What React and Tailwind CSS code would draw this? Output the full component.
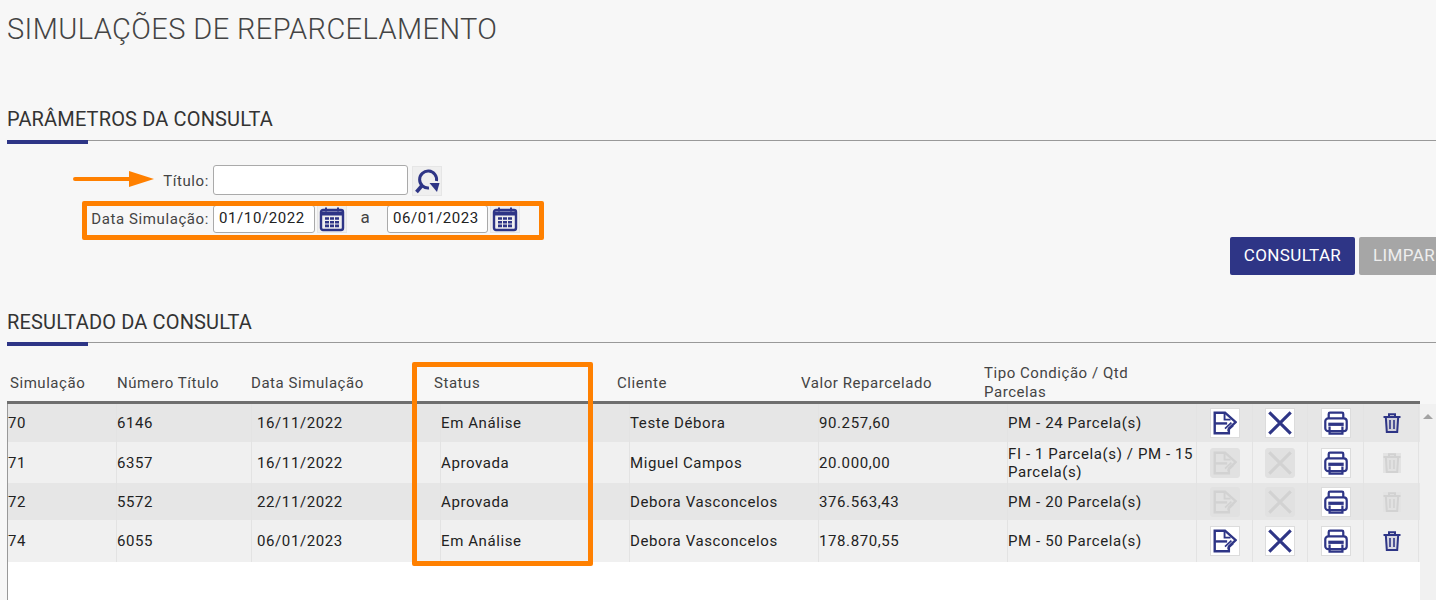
const AZUL = '#2e3586';

const linhas = [
  { sim: '70', titulo: '6146', data: '16/11/2022', status: 'Em Análise', cliente: 'Teste Débora', valor: '90.257,60', tipo: 'PM - 24 Parcela(s)', ativo: true, h: 'h-[38px]', bg: 'bg-[#e6e6e6]' },
  { sim: '71', titulo: '6357', data: '16/11/2022', status: 'Aprovada', cliente: 'Miguel Campos', valor: '20.000,00', tipo: 'FI - 1 Parcela(s) / PM - 15 Parcela(s)', ativo: false, h: 'h-[41px]', bg: 'bg-[#f0f0f0]' },
  { sim: '72', titulo: '5572', data: '22/11/2022', status: 'Aprovada', cliente: 'Debora Vasconcelos', valor: '376.563,43', tipo: 'PM - 20 Parcela(s)', ativo: false, h: 'h-[37px]', bg: 'bg-[#e6e6e6]' },
  { sim: '74', titulo: '6055', data: '06/01/2023', status: 'Em Análise', cliente: 'Debora Vasconcelos', valor: '178.870,55', tipo: 'PM - 50 Parcela(s)', ativo: true, h: 'h-[42px]', bg: 'bg-[#f0f0f0]' },
];

function IconeEditar({ cor }) {
  return (
    <svg viewBox="0 0 28 28" className="w-full h-full" fill="none" stroke={cor} strokeWidth="2.8">
      <path d="M2 2h12L26.500 13l-8 7.500V26H2z" />
      <path d="M13.500 2.500v7.500h7" strokeWidth="2.200" />
      <path d="M2.500 14.500h14" strokeWidth="2.800" />
      <path d="M14 20.500l7.500-7M17 23l6.500-6" strokeWidth="2" />
    </svg>
  );
}

function IconeFechar({ cor }) {
  return (
    <svg viewBox="0 0 28 28" className="w-full h-full" fill="none" stroke={cor} strokeWidth="3.600">
      <path d="M1.500 1.500l25 25M26.500 1.500l-25 25" />
    </svg>
  );
}

function IconeImprimir({ cor }) {
  return (
    <svg viewBox="0 0 28 28" className="w-full h-full" fill="none" stroke={cor} strokeWidth="2.600">
      <path d="M5.500 9V3.500q0-1.500 1.500-1.500h14q1.500 0 1.500 1.500V9" />
      <rect x="1.500" y="8.500" width="25" height="15" rx="3.500" />
      <path d="M5 15.500h18" strokeWidth="3.800" />
      <path d="M6.500 18v8.500h15V18" />
    </svg>
  );
}

function IconeLixeira({ cor }) {
  return (
    <svg viewBox="0 0 18 20" className="w-full h-full" fill="none" stroke={cor} strokeWidth="2">
      <path d="M0.500 4h17M6 4V1.200h6V4" />
      <path d="M2.800 4l1 15h10.400l1-15z" fill={cor} fillOpacity="0.12" />
      <path d="M7 7v9M11 7v9" strokeWidth="1.600" />
    </svg>
  );
}

function IconeBusca() {
  return (
    <svg viewBox="0 0 28 28" className="w-full h-full" fill="none" stroke={AZUL}>
      <path d="M23.500 14a8.500 8.500 0 1 0-7.500 7" strokeWidth="3" />
      <path d="M9.500 18L3.500 25" strokeWidth="3.600" />
      <path d="M16.500 16h10l-2.500 9z" fill={AZUL} stroke="none" />
    </svg>
  );
}

function IconeCalendario() {
  return (
    <svg viewBox="0 0 28 26" className="w-full h-full" fill="none">
      <rect x="3" y="4" width="22" height="20" rx="2" stroke={AZUL} strokeWidth="2.400" />
      <path d="M3 7.500h22" stroke={AZUL} strokeWidth="4" />
      <path d="M8 1.500v4M20 1.500v4" stroke={AZUL} strokeWidth="2" />
      <path d="M7 12.500h14M7 16.200h14M7 19.900h14" stroke={AZUL} strokeWidth="2.600" strokeDasharray="4 1" />
    </svg>
  );
}

function BotaoIcone({ ativo, children }) {
  return (
    <div className={`w-[30px] h-[30px] p-0.5 border ${ativo ? 'bg-white border-[#dcdcdc]' : 'bg-[#e1e1e1] border-[#e1e1e1] rounded-[3px]'}`}>
      {children}
    </div>
  );
}

function Secao({ titulo, className }) {
  return (
    <div className={className}>
      <h2 className="text-[20px] leading-6 text-[#333] tracking-[0.15px] pb-[9px] border-b border-[#999]">{titulo}</h2>
      <div className="w-[81px] h-1 -mt-px bg-[#2e3586]" />
    </div>
  );
}

function CampoData({ valor, largura }) {
  return (
    <div className="flex items-center">
      <input
        readOnly
        value={valor}
        className={`${largura} h-7 pl-[5px] pb-0.5 bg-white border border-[#aaa] rounded-[3px] text-[15px] tracking-[0.6px] text-[#222] outline-none`}
      />
      <div className="ml-0.5 w-[30px] h-7 bg-[#efefef] border border-[#e6e6e6]">
        <IconeCalendario />
      </div>
    </div>
  );
}

export default function App() {
  const corIcone = (ativo) => (ativo ? AZUL : '#d2d2d2');

  return (
    <div className="relative w-[1436px] h-[600px] overflow-hidden bg-[#f7f7f7] font-['Roboto',sans-serif]">
      <h1 className="pl-[7px] h-[58px] leading-[58px] text-[29px] font-light text-[#444] tracking-[0.4px]">
        SIMULAÇÕES DE REPARCELAMENTO
      </h1>

      <Secao titulo="PARÂMETROS DA CONSULTA" className="ml-[7px] mt-[49px]" />

      <div className="mt-[21px] flex items-center h-[30px]">
        <label className="w-[209px] mt-[3px] text-right text-[15px] tracking-[0.6px] text-[#444]">Título:</label>
        <input readOnly className="ml-1 w-[195px] h-[30px] bg-white border border-[#aaa] rounded-[3px] outline-none" />
        <div className="ml-1 mt-0.5 w-[30px] h-[30px] bg-[#efefef] border border-[#e6e6e6]">
          <IconeBusca />
        </div>
      </div>

      <div className="mt-[10px] flex items-center h-7">
        <label className="w-[209px] text-right text-[15px] tracking-[0.6px] text-[#444]">Data Simulação:</label>
        <div className="ml-1">
          <CampoData valor="01/10/2022" largura="w-[102px]" />
        </div>
        <span className="w-[40px] pr-1 pb-0.5 text-center text-[17px] text-[#444]">a</span>
        <CampoData valor="06/01/2023" largura="w-[101px]" />
      </div>

      <div className="mt-1 pl-[1230px] flex gap-1 h-[38px]">
        <button className="shrink-0 w-[125px] rounded-[2px] bg-[#2e3586] text-white text-[17px] tracking-[0.4px]">CONSULTAR</button>
        <button className="shrink-0 w-[90px] rounded-[2px] bg-[#a6a6a6] text-[#eee] text-[17px] tracking-[0.4px]">LIMPAR</button>
      </div>

      <Secao titulo="RESULTADO DA CONSULTA" className="ml-[7px] mt-[35px] [&>h2]:pb-2" />

      <div className="ml-[7px] mt-[17px] pt-px w-[1413px] h-[41px] pb-[3px] border-b-[3px] border-[#6e6e6e] grid grid-cols-[110px_134px_183px_183px_184px_183px_160px] items-center text-[15px] leading-[19px] tracking-[0.55px] text-[#444]">
        <div className="pl-[3px]">Simulação</div>
        <div>Número Título</div>
        <div>Data Simulação</div>
        <div>Status</div>
        <div>Cliente</div>
        <div>Valor Reparcelado</div>
        <div>Tipo Condição / Qtd Parcelas</div>
      </div>

      <div className="ml-[7px] flex h-[196px]">
        <div className="w-[1413px] bg-white border-l border-[#999]">
          {linhas.map((l) => (
            <div
              key={l.sim}
              className={`${l.h} ${l.bg} grid grid-cols-[108px_135px_189px_189px_189px_189px_189px_56px_55px_56px_56px] text-[15px] leading-[18px] tracking-[0.6px] text-[#222]`}
            >
              <div className="flex items-center">{l.sim}</div>
              <div className="flex items-center border-l border-[#e3e3e3]">{l.titulo}</div>
              <div className="flex items-center pl-[5px] border-l border-[#e3e3e3]">{l.data}</div>
              <div className="flex items-center border-l border-[#e3e3e3]">{l.status}</div>
              <div className="flex items-center border-l border-[#e3e3e3]">{l.cliente}</div>
              <div className="flex items-center border-l border-[#e3e3e3]">{l.valor}</div>
              <div className="flex items-center border-l border-[#e3e3e3]">{l.tipo}</div>
              <div className="flex items-center justify-center border-l border-[#e3e3e3]">
                <BotaoIcone ativo={l.ativo}><IconeEditar cor={corIcone(l.ativo)} /></BotaoIcone>
              </div>
              <div className="flex items-center justify-center border-l border-[#e3e3e3]">
                <BotaoIcone ativo={l.ativo}><IconeFechar cor={corIcone(l.ativo)} /></BotaoIcone>
              </div>
              <div className="flex items-center justify-center border-l border-[#e3e3e3]">
                <BotaoIcone ativo><IconeImprimir cor={AZUL} /></BotaoIcone>
              </div>
              <div className="flex items-center justify-center pl-0.5 border-x border-[#e3e3e3]">
                <div className={`w-[18px] h-5 ${l.ativo ? '' : 'bg-[#e3e3e3]'}`}>
                  <IconeLixeira cor={corIcone(l.ativo)} />
                </div>
              </div>
            </div>
          ))}
        </div>
        <div className="w-4 bg-[#f1f1f1] flex justify-center pt-[10px]">
          <div className="w-0 h-0 border-x-[5px] border-x-transparent border-b-[5px] border-b-[#a3a3a3]" />
        </div>
      </div>

      {/* marcações em laranja sobre o print */}
      <svg className="absolute left-[70px] top-[168px]" width="90" height="22" viewBox="0 0 90 22">
        <path d="M5 11h56" stroke="#ff8000" strokeWidth="4" strokeLinecap="round" />
        <path d="M59 3l25 8-25 8z" fill="#ff8000" />
      </svg>
      <div className="absolute left-[82px] top-[201px] w-[462px] h-[39px] border-[5px] border-[#ff8000] rounded-[2px]" />
      <div className="absolute left-[412px] top-[362px] w-[181px] h-[204px] border-[5px] border-[#ff8000] rounded-[2px]" />
    </div>
  );
}
